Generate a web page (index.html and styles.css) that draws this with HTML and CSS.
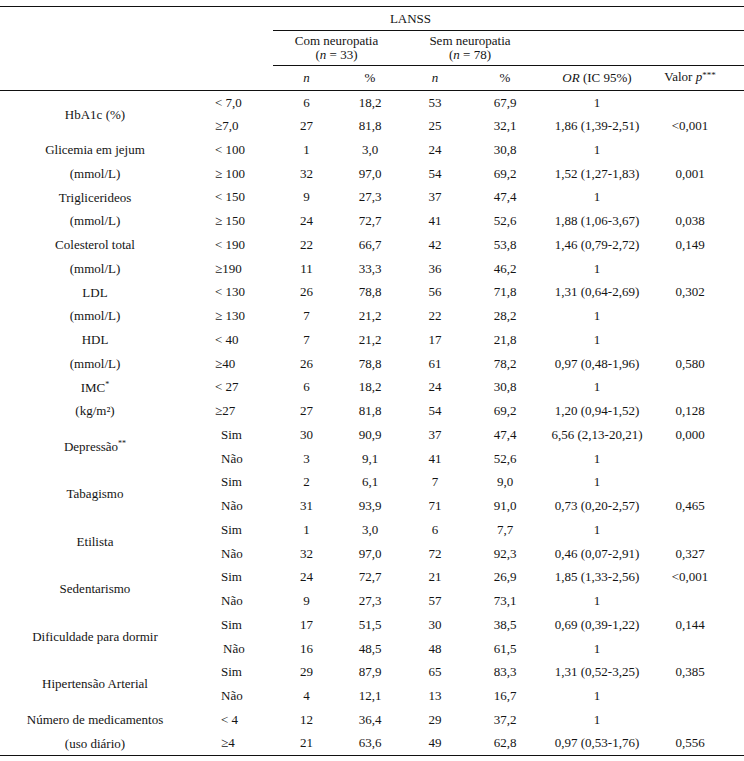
FILE: index.html
```html
<!DOCTYPE html>
<html lang="pt">
<head>
<meta charset="utf-8">
<link rel="stylesheet" href="styles.css">
</head>
<body>
<div class="wrap">
<table class="tbl">
  <colgroup>
    <col class="c-label"><col class="c-cat"><col class="c-n1"><col class="c-p1"><col class="c-n2"><col class="c-p2"><col class="c-or"><col class="c-pv">
  </colgroup>
  <thead>
    <tr class="h1">
      <th colspan="2" class="blank"></th>
      <th colspan="4" class="rule lanss">LANSS</th>
      <th colspan="2" class="rule"></th>
    </tr>
    <tr class="h2">
      <th colspan="2" class="blank"></th>
      <th colspan="2" class="rule grp">Com neuropatia<br>(<i>n</i> = 33)</th>
      <th colspan="2" class="rule grp">Sem neuropatia<br>(<i>n</i> = 78)</th>
      <th colspan="2" class="rule"></th>
    </tr>
    <tr class="h3">
      <th colspan="2"></th>
      <th><i>n</i></th>
      <th>%</th>
      <th><i>n</i></th>
      <th>%</th>
      <th><i>OR</i> (IC 95%)</th>
      <th class="pv-head">Valor <i>p</i><sup>***</sup></th>
    </tr>
  </thead>
  <tbody>
    <tr><td rowspan="2" class="lab">HbA1c (%)</td><td class="cat">&lt; 7,0</td><td>6</td><td>18,2</td><td>53</td><td>67,9</td><td>1</td><td class="pv"></td></tr>
    <tr><td class="cat">≥7,0</td><td>27</td><td>81,8</td><td>25</td><td>32,1</td><td>1,86 (1,39-2,51)</td><td class="pv">&lt;0,001</td></tr>

    <tr><td rowspan="2" class="lab two">Glicemia em jejum<br>(mmol/L)</td><td class="cat">&lt; 100</td><td>1</td><td>3,0</td><td>24</td><td>30,8</td><td>1</td><td class="pv"></td></tr>
    <tr><td class="cat">≥ 100</td><td>32</td><td>97,0</td><td>54</td><td>69,2</td><td>1,52 (1,27-1,83)</td><td class="pv">0,001</td></tr>

    <tr><td rowspan="2" class="lab two">Triglicerideos<br>(mmol/L)</td><td class="cat">&lt; 150</td><td>9</td><td>27,3</td><td>37</td><td>47,4</td><td>1</td><td class="pv"></td></tr>
    <tr><td class="cat">≥ 150</td><td>24</td><td>72,7</td><td>41</td><td>52,6</td><td>1,88 (1,06-3,67)</td><td class="pv">0,038</td></tr>

    <tr><td rowspan="2" class="lab two">Colesterol total<br>(mmol/L)</td><td class="cat">&lt; 190</td><td>22</td><td>66,7</td><td>42</td><td>53,8</td><td>1,46 (0,79-2,72)</td><td class="pv">0,149</td></tr>
    <tr><td class="cat">≥190</td><td>11</td><td>33,3</td><td>36</td><td>46,2</td><td>1</td><td class="pv"></td></tr>

    <tr><td rowspan="2" class="lab two">LDL<br>(mmol/L)</td><td class="cat">&lt; 130</td><td>26</td><td>78,8</td><td>56</td><td>71,8</td><td>1,31 (0,64-2,69)</td><td class="pv">0,302</td></tr>
    <tr><td class="cat">≥ 130</td><td>7</td><td>21,2</td><td>22</td><td>28,2</td><td>1</td><td class="pv"></td></tr>

    <tr><td rowspan="2" class="lab two">HDL<br>(mmol/L)</td><td class="cat">&lt; 40</td><td>7</td><td>21,2</td><td>17</td><td>21,8</td><td>1</td><td class="pv"></td></tr>
    <tr><td class="cat">≥40</td><td>26</td><td>78,8</td><td>61</td><td>78,2</td><td>0,97 (0,48-1,96)</td><td class="pv">0,580</td></tr>

    <tr><td rowspan="2" class="lab two">IMC<sup class="ast">*</sup><br>(kg/m²)</td><td class="cat">&lt; 27</td><td>6</td><td>18,2</td><td>24</td><td>30,8</td><td>1</td><td class="pv"></td></tr>
    <tr><td class="cat">≥27</td><td>27</td><td>81,8</td><td>54</td><td>69,2</td><td>1,20 (0,94-1,52)</td><td class="pv">0,128</td></tr>

    <tr><td rowspan="2" class="lab">Depressão<sup class="ast">**</sup></td><td class="cat ind">Sim</td><td>30</td><td>90,9</td><td>37</td><td>47,4</td><td>6,56 (2,13-20,21)</td><td class="pv">0,000</td></tr>
    <tr><td class="cat ind">Não</td><td>3</td><td>9,1</td><td>41</td><td>52,6</td><td>1</td><td class="pv"></td></tr>

    <tr><td rowspan="2" class="lab">Tabagismo</td><td class="cat ind">Sim</td><td>2</td><td>6,1</td><td>7</td><td>9,0</td><td>1</td><td class="pv"></td></tr>
    <tr><td class="cat ind">Não</td><td>31</td><td>93,9</td><td>71</td><td>91,0</td><td>0,73 (0,20-2,57)</td><td class="pv">0,465</td></tr>

    <tr><td rowspan="2" class="lab">Etilista</td><td class="cat ind">Sim</td><td>1</td><td>3,0</td><td>6</td><td>7,7</td><td>1</td><td class="pv"></td></tr>
    <tr><td class="cat ind">Não</td><td>32</td><td>97,0</td><td>72</td><td>92,3</td><td>0,46 (0,07-2,91)</td><td class="pv">0,327</td></tr>

    <tr><td rowspan="2" class="lab">Sedentarismo</td><td class="cat ind">Sim</td><td>24</td><td>72,7</td><td>21</td><td>26,9</td><td>1,85 (1,33-2,56)</td><td class="pv">&lt;0,001</td></tr>
    <tr><td class="cat ind">Não</td><td>9</td><td>27,3</td><td>57</td><td>73,1</td><td>1</td><td class="pv"></td></tr>

    <tr><td rowspan="2" class="lab">Dificuldade para dormir</td><td class="cat ind">Sim</td><td>17</td><td>51,5</td><td>30</td><td>38,5</td><td>0,69 (0,39-1,22)</td><td class="pv">0,144</td></tr>
    <tr><td class="cat ind2">Não</td><td>16</td><td>48,5</td><td>48</td><td>61,5</td><td>1</td><td class="pv"></td></tr>

    <tr><td rowspan="2" class="lab">Hipertensão Arterial</td><td class="cat ind">Sim</td><td>29</td><td>87,9</td><td>65</td><td>83,3</td><td>1,31 (0,52-3,25)</td><td class="pv">0,385</td></tr>
    <tr><td class="cat ind">Não</td><td>4</td><td>12,1</td><td>13</td><td>16,7</td><td>1</td><td class="pv"></td></tr>

    <tr><td rowspan="2" class="lab two">Número de medicamentos<br>(uso diário)</td><td class="cat ind">&lt; 4</td><td>12</td><td>36,4</td><td>29</td><td>37,2</td><td>1</td><td class="pv"></td></tr>
    <tr><td class="cat ind">≥4</td><td>21</td><td>63,6</td><td>49</td><td>62,8</td><td>0,97 (0,53-1,76)</td><td class="pv">0,556</td></tr>
  </tbody>
</table>
</div>
</body>
</html>
```

FILE: styles.css
```css
html, body {
  margin: 0;
  padding: 0;
  background: #ffffff;
}

.wrap {
  padding-top: 6px;
  width: 744px;
}

.tbl {
  width: 744px;
  border-collapse: collapse;
  table-layout: fixed;
  font-family: "Liberation Serif", "Times New Roman", serif;
  font-size: 13px;
  color: #141414;
  border-top: 1px solid #111111;
  border-bottom: 1px solid #111111;
}

.c-label { width: 190px; }
.c-cat { width: 83px; }
.c-n1 { width: 67px; }
.c-p1 { width: 60px; }
.c-n2 { width: 70px; }
.c-p2 { width: 70px; }
.c-or { width: 114px; }
.c-pv { width: 90px; }

.tbl th,
.tbl td {
  padding: 0;
  text-align: center;
  vertical-align: middle;
  font-weight: normal;
  line-height: 14px;
}

.tbl thead tr.h1 th { height: 23px; }
.tbl thead tr.h2 th { height: 34px; }
.tbl thead tr.h3 th { height: 21px; border-bottom: 1px solid #111111; }

.tbl th.rule { border-bottom: 1px solid #111111; }

.tbl th.lanss { padding-left: 8px; }

.tbl th.grp { line-height: 14px; }

.tbl th.pv-head {
  padding-right: 18px;
  padding-bottom: 3px;
}

.tbl sup {
  font-size: 9px;
  line-height: 0;
  vertical-align: 3px;
}

.tbl sup.ast {
  font-size: 8px;
  vertical-align: 5px;
}

.tbl tbody tr { height: 23.75px; }

.tbl tbody td { line-height: 16px; }

.tbl td.lab { line-height: 16px; }

.tbl td.lab.two { line-height: 23.5px; }

.tbl td.cat {
  text-align: left;
  padding-left: 25px;
}

.tbl td.cat.ind { padding-left: 31px; }
.tbl td.cat.ind2 { padding-left: 33px; }

.tbl td.pv { padding-right: 18px; }
```
